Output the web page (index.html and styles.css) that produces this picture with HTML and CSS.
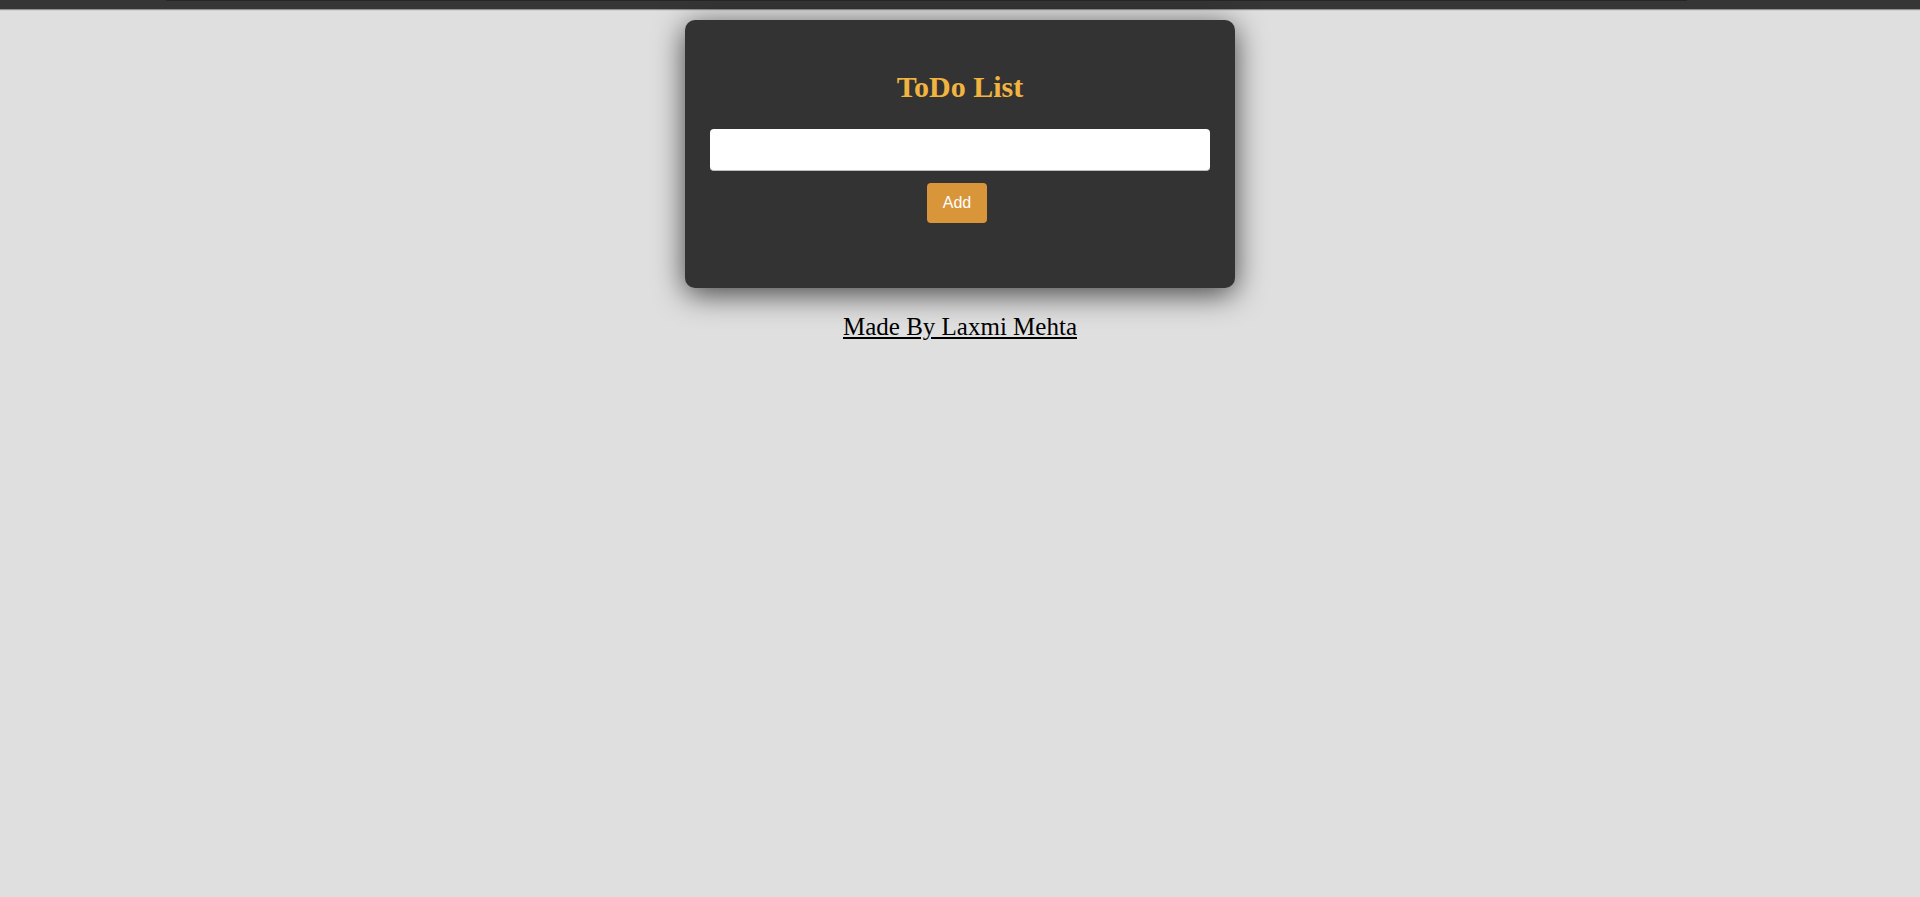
FILE: index.html
```html
<!DOCTYPE html>
<html lang="en">
<head>
<meta charset="utf-8">
<title>ToDo List</title>
<link rel="stylesheet" href="styles.css">
</head>
<body>
<div class="topbar"><div class="topbar-line"></div></div>
<main class="page">
  <section class="card">
    <h1 class="title">ToDo List</h1>
    <form class="todo-form">
      <input class="todo-input" type="text">
      <button class="add-btn" type="button">Add</button>
    </form>
    <ul class="todo-list"></ul>
  </section>
  <a class="credit" href="#">Made By Laxmi Mehta</a>
</main>
</body>
</html>
```
FILE: styles.css
```css
html, body {
  margin: 0;
  padding: 0;
}
body {
  background: #dfdfdf;
  font-family: "Liberation Serif", "Times New Roman", serif;
  min-height: 897px;
}
.topbar {
  height: 9px;
  background: #363636;
  box-shadow: 0 1px 1px rgba(0,0,0,0.35);
  display: flex;
  justify-content: flex-start;
  padding-left: 166px;
  box-sizing: border-box;
}
.topbar-line {
  width: 1521px;
  height: 1px;
  background: #262626;
}
.page {
  display: flex;
  flex-direction: column;
  align-items: center;
}
.card {
  margin-top: 11px;
  width: 550px;
  box-sizing: border-box;
  padding: 25px 25px 26px;
  background: #333333;
  border-radius: 10px;
  box-shadow: 0 6px 30px rgba(0,0,0,0.7);
}
.title {
  margin: 24px 0 25px;
  text-align: center;
  color: #f2b441;
  font-size: 30px;
  font-weight: bold;
  line-height: 35px;
}
.todo-form {
  display: flex;
  flex-direction: column;
  align-items: center;
  gap: 12px;
  margin: 0;
}
.todo-input {
  width: 500px;
  height: 42px;
  box-sizing: border-box;
  border: none;
  border-bottom: 1px solid #bdbdbd;
  border-radius: 4px;
  background: #ffffff;
  font-size: 16px;
  padding: 0 10px;
}
.add-btn {
  height: 40px;
  padding: 0 16px;
  margin-right: 6px;
  border: none;
  border-radius: 4px;
  background: #d8953a;
  color: #ffffff;
  font-family: "Liberation Sans", Arial, sans-serif;
  font-size: 16px;
}
.todo-list {
  margin: 0;
  padding: 0;
  list-style: none;
  min-height: 39px;
}
.credit {
  margin-top: 25px;
  color: #000000;
  font-size: 25px;
  text-decoration: underline;
}
```
